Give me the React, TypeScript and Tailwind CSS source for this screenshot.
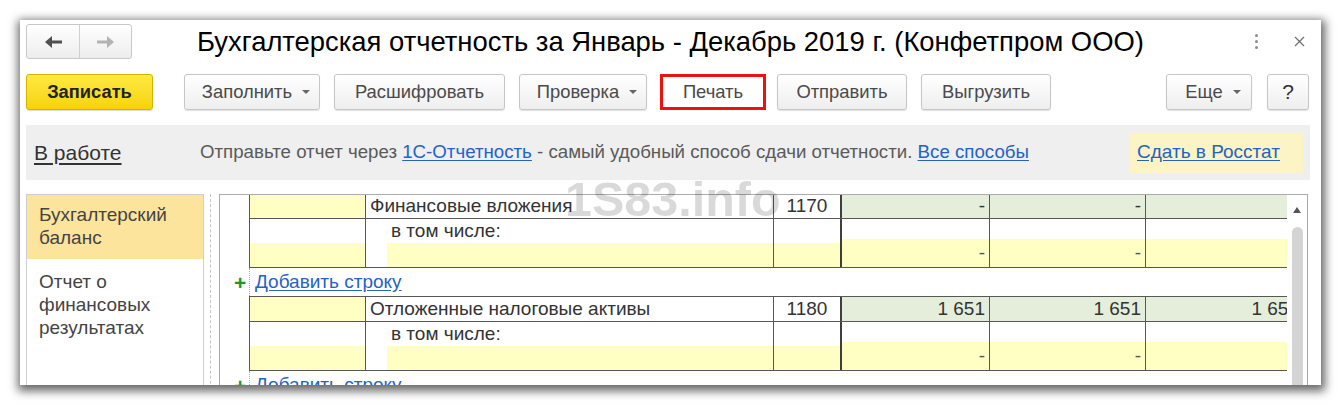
import React from "react";

const line = "border-[#575757]";

function Caret() {
  return (
    <span className="ml-[10px] w-0 h-0 border-l-[4px] border-r-[4px] border-t-[4px] border-l-transparent border-r-transparent border-t-[#666]" />
  );
}

function Btn({
  label,
  className,
  dropdown,
}: {
  label: string;
  className: string;
  dropdown?: boolean;
}) {
  return (
    <div
      className={`h-[36px] flex items-center justify-center rounded-[3px] border border-[#c6c6c6] bg-linear-to-b from-white to-[#eeeeee] shadow-[0_1px_1px_rgba(0,0,0,0.12)] text-[18.4px] text-[#4a4a4a] ${dropdown ? "pl-[8px]" : ""} ${className}`}
    >
      <span>{label}</span>
      {dropdown && <Caret />}
    </div>
  );
}

function Arrow({ dir, color }: { dir: "left" | "right"; color: string }) {
  return (
    <svg width="17" height="12" viewBox="0 0 17 12" className={dir === "right" ? "rotate-180" : ""}>
      <polygon points="0,6 7,0 7,4.5 17,4.5 17,7.5 7,7.5 7,12" fill={color} />
    </svg>
  );
}

function Group({
  name,
  code,
  top,
  values,
  subs,
}: {
  name: string;
  code: string;
  top?: boolean;
  values: string[];
  subs: string[];
}) {
  const widths = ["w-[148px]", "w-[156px]", "w-[157px]"];
  return (
    <div className={`w-[1054px] border-l ${line} ${top ? `border-t ${line}` : "-mt-[1px]"} text-[19px] text-[#333]`}>
      {/* main row */}
      <div className={`flex h-[25px] border-b ${line}`}>
        <div className={`w-[116px] shrink-0 bg-[#ffffc3] border-r ${line}`} />
        <div className={`w-[408px] shrink-0 border-r ${line} pl-[4px] flex items-center whitespace-nowrap`}>{name}</div>
        <div className="w-[68px] shrink-0 border-r-2 border-[#3f3f3f] flex items-center justify-center">{code}</div>
        {values.map((v, i) => (
          <div
            key={i}
            className={`${widths[i]} shrink-0 bg-[#e4eedb] ${i < 2 ? `border-r ${line}` : ""} flex items-center justify-end pr-[4px] whitespace-nowrap`}
          >
            {v}
          </div>
        ))}
      </div>
      {/* в том числе */}
      <div className={`flex h-[49px] border-b ${line}`}>
        <div className={`w-[116px] shrink-0 border-r ${line} flex flex-col`}>
          <div className="h-[24px]" />
          <div className="flex-1 bg-[#ffffc3]" />
        </div>
        <div className={`w-[408px] shrink-0 border-r ${line} flex flex-col`}>
          <div className="h-[24px] pl-[25px] flex items-center">в том числе:</div>
          <div className="flex-1 ml-[21px] bg-[#ffffc3]" />
        </div>
        <div className="w-[68px] shrink-0 border-r-2 border-[#3f3f3f] flex flex-col">
          <div className="h-[24px]" />
          <div className="flex-1 bg-[#ffffc3]" />
        </div>
        {subs.map((v, i) => (
          <div key={i} className={`${widths[i]} shrink-0 ${i < 2 ? `border-r ${line}` : ""} flex flex-col`}>
            <div className="h-[24px]" />
            <div className="flex-1 bg-[#ffffc3] flex items-center justify-end pr-[4px] text-[#555]">{v}</div>
          </div>
        ))}
      </div>
    </div>
  );
}

function AddRow() {
  return (
    <div className="h-[28px] flex items-center text-[19px]">
      <span className="w-[15px] ml-[14px] text-[21px] font-bold text-[#1e9a1e] leading-none">+</span>
      <div className="h-full border-l border-dotted border-[#aaa] pl-[5px] flex items-center">
        <span className="text-[#2462c4] underline underline-offset-2">Добавить строку</span>
      </div>
    </div>
  );
}

export default function App() {
  return (
    <div className="w-[1341px] h-[406px] bg-white pl-[20px] pt-[20px] font-['Liberation_Sans',Arial,sans-serif]">
      <div className="relative w-[1301px] h-[365px] bg-white overflow-hidden shadow-[1px_3px_9px_3px_rgba(0,0,0,0.6)] pl-[6px] pr-[11px] pt-[4px] flex flex-col">
        {/* header */}
        <div className="flex items-center h-[35px] shrink-0">
          <div className="w-[106px] h-[35px] flex rounded-[3px] border border-[#c8c8c8] bg-linear-to-b from-white to-[#ededed]">
            <div className="w-[53px] flex items-center justify-center border-r border-[#d0d0d0]">
              <Arrow dir="left" color="#505050" />
            </div>
            <div className="flex-1 flex items-center justify-center">
              <Arrow dir="right" color="#b3b3b3" />
            </div>
          </div>
          <div className="ml-[65px] text-[27.4px] text-black whitespace-nowrap">
            Бухгалтерская отчетность за Январь - Декабрь 2019 г. (Конфетпром ООО)
          </div>
          <div className="ml-auto flex items-center">
            <div className="flex flex-col gap-[3px]">
              <span className="w-[3px] h-[3px] rounded-full bg-[#8c8c8c]" />
              <span className="w-[3px] h-[3px] rounded-full bg-[#8c8c8c]" />
              <span className="w-[3px] h-[3px] rounded-full bg-[#8c8c8c]" />
            </div>
            <svg width="11" height="11" viewBox="0 0 11 11" className="ml-[36px] mr-[5px]">
              <path d="M1 1 L10 10 M10 1 L1 10" stroke="#707070" strokeWidth="1.3" />
            </svg>
          </div>
        </div>

        {/* toolbar */}
        <div className="flex items-center h-[36px] mt-[15px] shrink-0">
          <div className="w-[127px] h-[36px] flex items-center justify-center rounded-[3px] border border-[#d3b300] bg-linear-to-b from-[#ffe93f] to-[#f6d300] shadow-[0_1px_1px_rgba(0,0,0,0.15)] text-[18.3px] font-bold text-[#222]">
            Записать
          </div>
          <Btn label="Заполнить" dropdown className="ml-[31px] w-[136px]" />
          <Btn label="Расшифровать" className="ml-[14px] w-[171px]" />
          <Btn label="Проверка" dropdown className="ml-[14px] w-[128px]" />
          <div className="ml-[13px] w-[106px] h-[36px] border-[3px] border-[#ee1111] bg-white flex items-center justify-center text-[18.4px] text-[#4a4a4a]">
            Печать
          </div>
          <Btn label="Отправить" className="ml-[11px] w-[130px]" />
          <Btn label="Выгрузить" className="ml-[14px] w-[130px]" />
          <Btn label="Еще" dropdown className="ml-auto w-[86px]" />
          <Btn label="?" className="ml-[15px] mr-[1px] w-[42px] text-[21px]! text-[#333]!" />
        </div>

        {/* info bar */}
        <div className="mt-[15px] h-[55px] shrink-0 bg-[#efefef] flex items-center pl-[8px] pr-[7px]">
          <div className="w-[166px] shrink-0">
            <span className="text-[21px] text-[#333] underline underline-offset-3">В работе</span>
          </div>
          <div className="text-[18.7px] text-[#5a5a5a] whitespace-nowrap">
            Отправьте отчет через{" "}
            <span className="text-[#2462c4] underline underline-offset-2">1С-Отчетность</span> - самый удобный способ
            сдачи отчетности.{" "}
            <span className="text-[#2462c4] underline underline-offset-2">Все способы</span>
          </div>
          <div className="ml-auto h-[40px] w-[174px] bg-[#fcf4c4] flex items-center pl-[8px]">
            <span className="text-[19px] text-[#2462c4] underline underline-offset-2">Сдать в Росстат</span>
          </div>
        </div>

        {/* content */}
        <div className="mt-[14px] flex-1 flex min-h-0">
          <div className="w-[178px] shrink-0 h-[220px] border border-[#cfcfcf] text-[19px] text-[#444] leading-[23px]">
            <div className="h-[64px] bg-[#fde49d] pl-[12px] pt-[8px]">
              Бухгалтерский
              <br />
              баланс
            </div>
            <div className="pl-[12px] pt-[11px]">
              Отчет о
              <br />
              финансовых
              <br />
              результатах
            </div>
          </div>
          <div className="ml-[6px] h-[220px] border-l border-dashed border-[#c4c4c4]" />
          <div className="ml-[8px] w-[1089px] h-[220px] border border-[#ababab] flex">
            <div className="w-[1067px] shrink-0 overflow-hidden pl-[29px]">
              <div className="w-[1038px] overflow-hidden">
                <Group name="Финансовые вложения" code="1170" values={["-", "-", "-"]} subs={["-", "-", "-"]} />
              </div>
              <div className="-ml-[29px]">
                <AddRow />
              </div>
              <div className="w-[1038px] overflow-hidden">
                <Group
                  top
                  name="Отложенные налоговые активы"
                  code="1180"
                  values={["1 651", "1 651", "1 651"]}
                  subs={["-", "-", "-"]}
                />
              </div>
              <div className="-ml-[29px]">
                <AddRow />
              </div>
            </div>
            <div className="flex-1 flex flex-col items-center pt-[12px]">
              <span className="w-0 h-0 border-l-[4px] border-r-[4px] border-b-[6px] border-l-transparent border-r-transparent border-b-[#555]" />
              <div className="mt-[14px] w-[11px] flex-1 rounded-t-full bg-[#d4d4d4]" />
            </div>
          </div>
        </div>

        {/* watermark */}
        <div className="absolute left-[545px] top-[155px] text-[48.5px] font-bold leading-none text-black/15 pointer-events-none">
          1S83.info
        </div>
      </div>
    </div>
  );
}
